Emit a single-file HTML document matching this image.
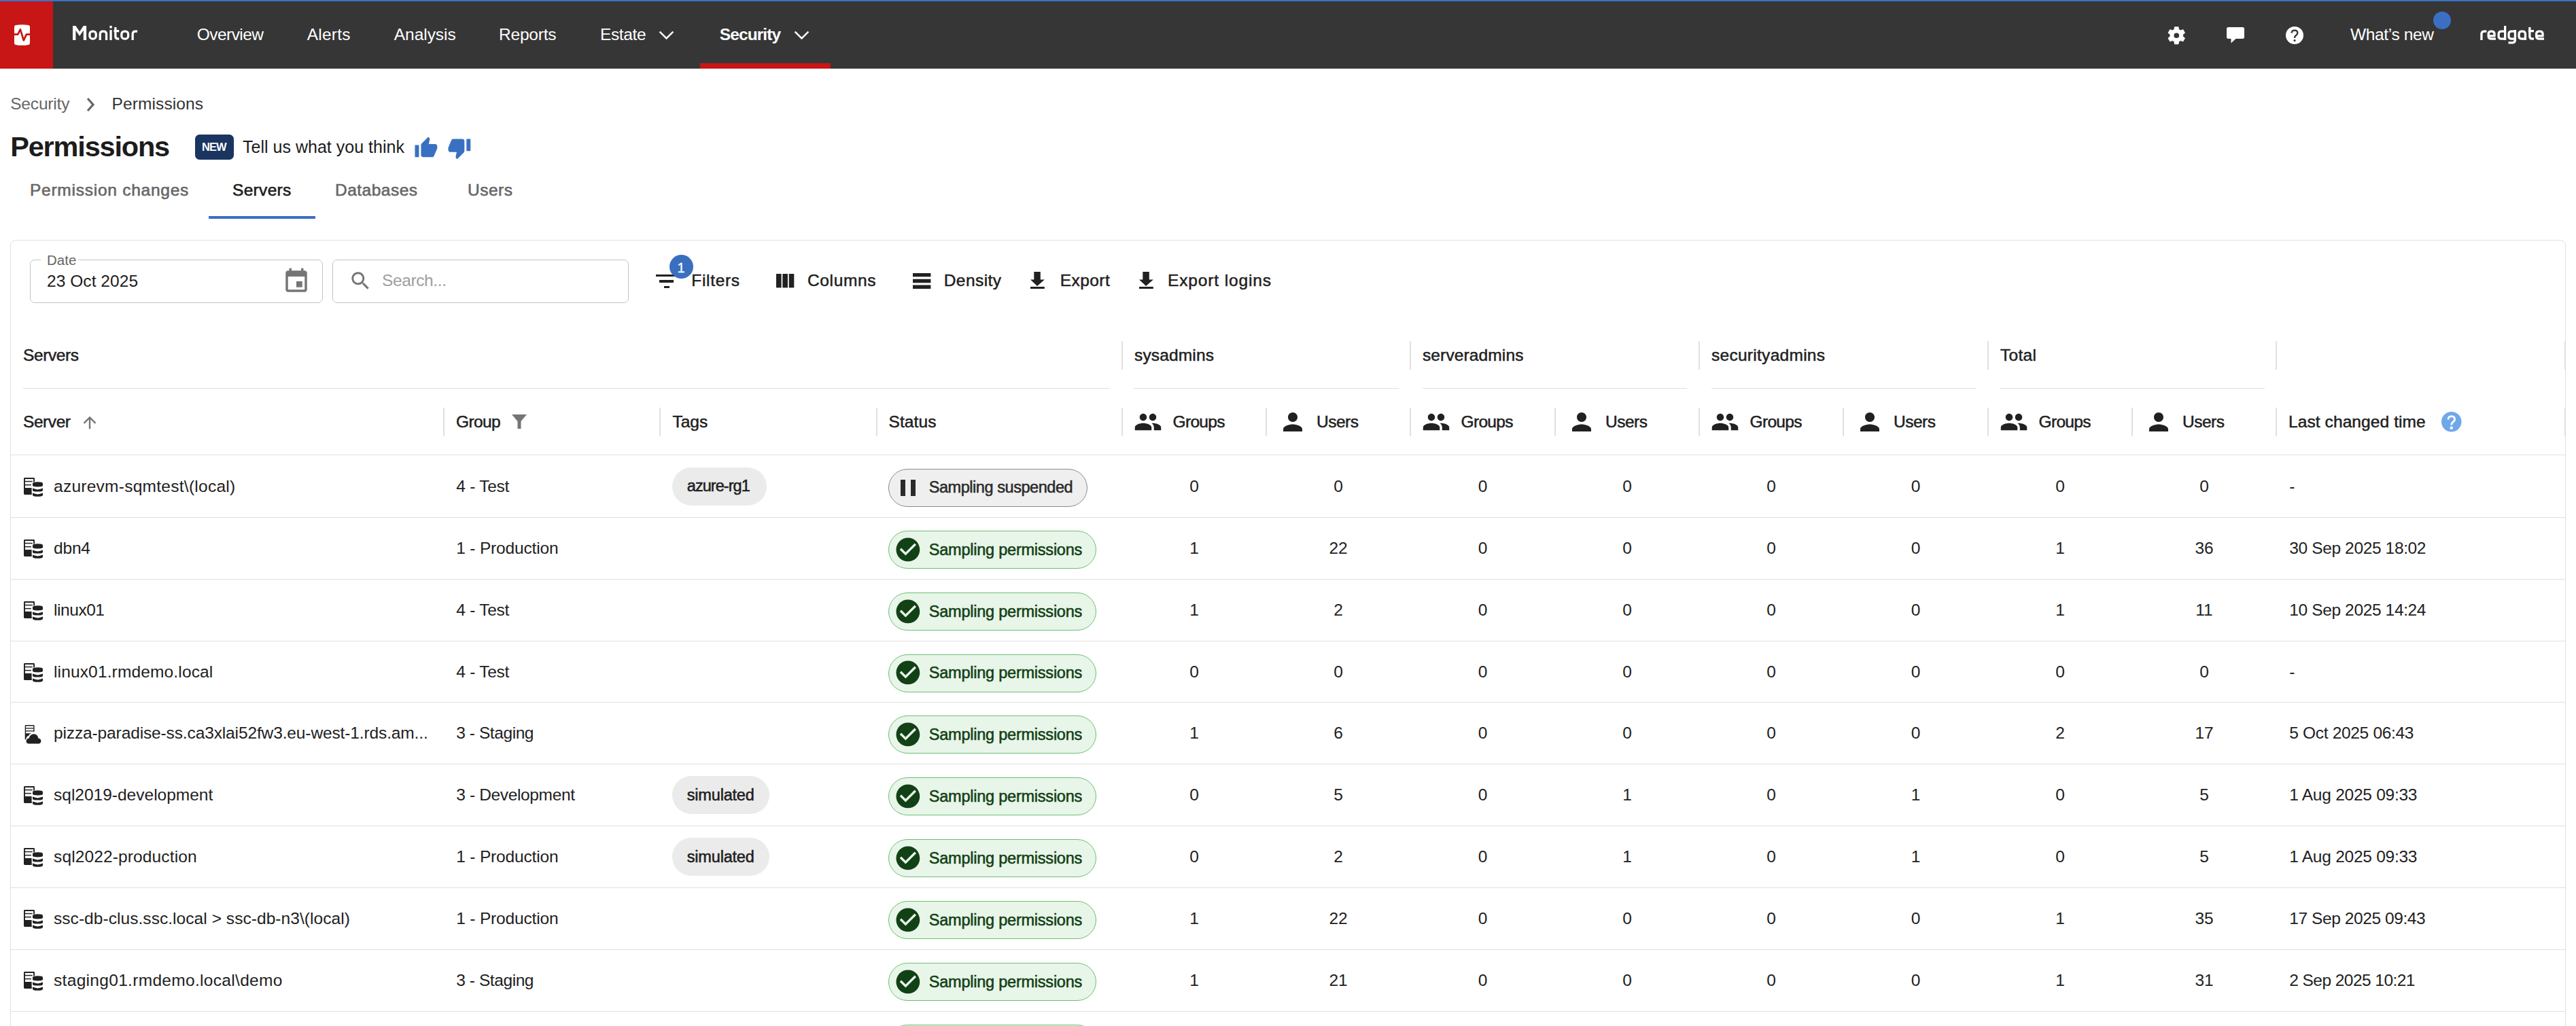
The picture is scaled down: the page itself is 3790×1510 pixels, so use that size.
<!DOCTYPE html>
<html><head><meta charset="utf-8"><title>Permissions - Servers</title>
<style>
html,body{margin:0;padding:0;background:#fff;width:3790px;height:1510px;overflow:hidden;}
body{position:relative;font-family:"Liberation Sans",sans-serif;}
svg{display:block;overflow:visible}
</style></head><body>
<div style="position:absolute;left:0px;top:0px;width:3790px;height:2px;background:#3a74c4"></div>
<div style="position:absolute;left:0px;top:2px;width:3790px;height:99px;background:#363636"></div>
<div style="position:absolute;left:0px;top:2px;width:78px;height:99px;background:#c81515"></div>
<svg style="position:absolute;left:21.00px;top:36.00px;" width="23" height="31" viewBox="0 0 23 31"><path d="M0 3.6 Q0 1.5 2.2 1.1 Q11.5 -0.7 20.8 1.1 Q23 1.5 23 3.6 V27.4 Q23 29.5 20.8 29.9 Q11.5 31.7 2.2 29.9 Q0 29.5 0 27.4 Z" fill="#fff"/><path d="M0 14.6 H5.2 L8.9 7.3 L13.8 23.4 L18 14.6 H23" fill="none" stroke="#c81515" stroke-width="2.7" stroke-linejoin="round"/></svg>
<svg style="position:absolute;left:0;top:0" width="3790" height="101" viewBox="0 0 3790 101"><g fill="none" stroke="#fff" stroke-width="3.3" stroke-linejoin="round"><rect x="131.95" y="46.05" width="9.3" height="11.05" rx="4.2"/><path d="M147.25 59.06 V50.2 Q147.25 46.05 151.4 46.05 H152.4 Q156.55 46.05 156.55 50.2 V59.06"/><path d="M163.05 44.1 V59.06"/><path d="M169.85 40 V53.2 Q169.85 57.1 173.75 57.1 H175.2 M167.5 45.6 H175.2"/><rect x="178.85" y="46.05" width="9.8" height="11.05" rx="4.2"/><path d="M195.15 59.06 V50.2 Q195.15 46.05 199.3 46.05 H202.1"/><path d="M3650.95 59.06 V50.2 Q3650.95 46.05 3655.1 46.05 H3658.4"/><path d="M3672 57.1 H3665.3 Q3661.15 57.1 3661.15 52.95 V50.2 Q3661.15 46.05 3665.3 46.05 H3665.9 Q3670.05 46.05 3670.05 50.2 V52.9 H3661.15"/><path d="M3685.65 37.9 V59.06 M3685.65 57.1 H3680.3 Q3676.15 57.1 3676.15 52.95 V50.2 Q3676.15 46.05 3680.3 46.05 H3685.65"/><path d="M3700.45 44.1 V58.8 Q3700.45 62.9 3696.3 62.9 H3690.5 M3700.45 57.1 H3695.2 Q3691.05 57.1 3691.05 52.95 V50.2 Q3691.05 46.05 3695.2 46.05 H3700.45"/><path d="M3715.45 59.06 V50.2 Q3715.45 46.05 3711.3 46.05 H3710.2 Q3706.05 46.05 3706.05 50.2 V52.95 Q3706.05 57.1 3710.2 57.1 H3715.45"/><path d="M3721.85 40 V53.2 Q3721.85 57.1 3725.75 57.1 H3728 M3719.9 45.6 H3728"/><path d="M3743 57.1 H3735.75 Q3731.6 57.1 3731.6 52.95 V50.2 Q3731.6 46.05 3735.75 46.05 H3736.95 Q3741.1 46.05 3741.1 50.2 V52.9 H3731.6"/></g><g fill="#fff"><rect x="161.4" y="37.9" width="3.3" height="3.6"/><path d="M107 59.06 V37.9 H111.4 L117.1 46.6 L122.8 37.9 H127.1 V59.06 H122.8 V44.7 L117.1 53.1 L111.4 44.7 V59.06 Z"/></g></svg>
<div style="position:absolute;top:38.56px;font-size:24.5px;line-height:24.5px;color:#fff;white-space:nowrap;letter-spacing:-0.538px;left:289.70px;">Overview</div>
<div style="position:absolute;top:38.56px;font-size:24.5px;line-height:24.5px;color:#fff;white-space:nowrap;letter-spacing:0.236px;left:451.70px;">Alerts</div>
<div style="position:absolute;top:38.56px;font-size:24.5px;line-height:24.5px;color:#fff;white-space:nowrap;letter-spacing:-0.048px;left:579.80px;">Analysis</div>
<div style="position:absolute;top:38.56px;font-size:24.5px;line-height:24.5px;color:#fff;white-space:nowrap;letter-spacing:-0.196px;left:734.00px;">Reports</div>
<div style="position:absolute;top:38.56px;font-size:24.5px;line-height:24.5px;color:#fff;white-space:nowrap;letter-spacing:-0.331px;left:882.90px;">Estate</div>
<div style="position:absolute;top:38.56px;font-size:24.5px;line-height:24.5px;color:#fff;white-space:nowrap;font-weight:700;letter-spacing:-0.911px;left:1058.80px;">Security</div>
<svg style="position:absolute;left:969.00px;top:45.30px;" width="23" height="14" viewBox="0 0 23 14"><path d="M1.6 1.6 L11.5 11.5 L21.4 1.6" fill="none" stroke="#fff" stroke-width="2.5"/></svg>
<svg style="position:absolute;left:1167.50px;top:45.30px;" width="23" height="14" viewBox="0 0 23 14"><path d="M1.6 1.6 L11.5 11.5 L21.4 1.6" fill="none" stroke="#fff" stroke-width="2.5"/></svg>
<div style="position:absolute;left:1030px;top:93px;width:192px;height:8px;background:#c81515"></div>
<svg style="position:absolute;left:3185.75px;top:35.75px;" width="32.5" height="32.5" viewBox="0 0 24 24"><path fill="#fff" d="M19.14,12.94c0.04-0.3,0.06-0.61,0.06-0.94c0-0.32-0.02-0.64-0.07-0.94l2.03-1.58c0.18-0.14,0.23-0.41,0.12-0.61 l-1.92-3.32c-0.12-0.22-0.37-0.29-0.59-0.22l-2.39,0.96c-0.5-0.38-1.03-0.7-1.62-0.94L14.4,2.81c-0.04-0.24-0.24-0.41-0.48-0.41 h-3.84c-0.24,0-0.43,0.17-0.47,0.41L9.25,5.35C8.66,5.59,8.12,5.92,7.63,6.29L5.24,5.33c-0.22-0.08-0.47,0-0.59,0.22L2.74,8.87 C2.62,9.08,2.66,9.34,2.86,9.48l2.03,1.58C4.84,11.36,4.8,11.69,4.8,12s0.02,0.64,0.07,0.94l-2.03,1.58 c-0.18,0.14-0.23,0.41-0.12,0.61l1.92,3.32c0.12,0.22,0.37,0.29,0.59,0.22l2.39-0.96c0.5,0.38,1.03,0.7,1.62,0.94l0.36,2.54 c0.05,0.24,0.24,0.41,0.48,0.41h3.84c0.24,0,0.44-0.17,0.47-0.41l0.36-2.54c0.59-0.24,1.13-0.56,1.62-0.94l2.39,0.96 c0.22,0.08,0.47,0,0.59-0.22l1.92-3.32c0.12-0.22,0.07-0.47-0.12-0.61L19.14,12.94z"/><circle cx="12" cy="12" r="2.85" fill="#363636"/></svg>
<svg style="position:absolute;left:3276.00px;top:40.00px;" width="26" height="24" viewBox="0 0 26 24"><path fill="#fff" d="M2.5 0 H23.5 Q26 0 26 2.5 V14.5 Q26 17 23.5 17 H13.5 L6.5 23.5 V17 H2.5 Q0 17 0 14.5 V2.5 Q0 0 2.5 0 Z"/></svg>
<svg style="position:absolute;left:3363.00px;top:39.00px;" width="26" height="26" viewBox="0 0 26 26"><circle cx="13" cy="13" r="13" fill="#fff"/><path d="M8.6 9.6 Q8.8 5.6 13 5.6 Q17.3 5.7 17.3 9.4 Q17.3 11.6 14.8 13.3 Q13 14.6 13 17" fill="none" stroke="#363636" stroke-width="2.4"/><circle cx="13" cy="20.6" r="1.6" fill="#363636"/></svg>
<div style="position:absolute;top:38.56px;font-size:24.5px;line-height:24.5px;color:#fff;white-space:nowrap;letter-spacing:-0.361px;left:3458.00px;">What’s new</div>
<div style="position:absolute;left:3580px;top:17px;width:26px;height:26px;border-radius:50%;background:#3a6fc4"></div>
<div style="position:absolute;top:140.76px;font-size:24.5px;line-height:24.5px;color:#666;white-space:nowrap;letter-spacing:-0.171px;left:15.20px;">Security</div>
<svg style="position:absolute;left:124.00px;top:142.00px;" width="20" height="24" viewBox="0 0 20 24"><path d="M5 3 L13 12 L5 21" fill="none" stroke="#666" stroke-width="3.2"/></svg>
<div style="position:absolute;top:140.76px;font-size:24.5px;line-height:24.5px;color:#333;white-space:nowrap;letter-spacing:0.097px;left:164.60px;">Permissions</div>
<div style="position:absolute;top:195.36px;font-size:41.5px;line-height:41.5px;color:#1c1c1c;white-space:nowrap;font-weight:700;letter-spacing:-1.180px;left:15.20px;">Permissions</div>
<div style="position:absolute;left:287px;top:198px;width:57px;height:37px;border-radius:6.5px;background:#1a3560"></div>
<div style="position:absolute;top:208.03px;font-size:16.5px;line-height:16.5px;color:#fff;white-space:nowrap;font-weight:700;letter-spacing:-0.997px;left:297.00px;">NEW</div>
<div style="position:absolute;top:203.83px;font-size:25px;line-height:25px;color:#1c1c1c;white-space:nowrap;letter-spacing:0.015px;left:357.00px;">Tell us what you think</div>
<svg style="position:absolute;left:608.51px;top:200.41px;" width="35.76" height="35.76" viewBox="0 0 24 24"><path fill="#3a70c2" d="M1 21h4V9H1v12zm22-11c0-1.1-.9-2-2-2h-6.31l.95-4.57.03-.32c0-.41-.17-.79-.44-1.06L14.17 1 7.59 7.59C7.22 7.95 7 8.45 7 9v10c0 1.1.9 2 2 2h9c.83 0 1.54-.5 1.84-1.22l3.02-7.05c.09-.23.14-.47.14-.73v-2z"/></svg>
<svg style="position:absolute;left:657.51px;top:199.83px;" width="35.76" height="35.76" viewBox="0 0 24 24"><path fill="#3a70c2" d="M15 3H6c-.83 0-1.54.5-1.84 1.22l-3.02 7.05c-.09.23-.14.47-.14.73v2c0 1.1.9 2 2 2h6.31l-.95 4.57-.03.32c0 .41.17.79.44 1.06L9.83 23l6.59-6.59c.36-.36.58-.86.58-1.41V5c0-1.1-.9-2-2-2zm4 0v12h4V3h-4z"/></svg>
<div style="position:absolute;top:268.06px;font-size:24.5px;line-height:24.5px;color:#666;white-space:nowrap;letter-spacing:0.747px;-webkit-text-stroke:0.6px #666;left:44.00px;">Permission changes</div>
<div style="position:absolute;top:268.06px;font-size:24.5px;line-height:24.5px;color:#1c1c1c;white-space:nowrap;letter-spacing:0.316px;-webkit-text-stroke:0.6px #1c1c1c;left:342.00px;">Servers</div>
<div style="position:absolute;top:268.06px;font-size:24.5px;line-height:24.5px;color:#666;white-space:nowrap;letter-spacing:0.483px;-webkit-text-stroke:0.6px #666;left:493.00px;">Databases</div>
<div style="position:absolute;top:268.06px;font-size:24.5px;line-height:24.5px;color:#666;white-space:nowrap;letter-spacing:0.508px;-webkit-text-stroke:0.6px #666;left:688.00px;">Users</div>
<div style="position:absolute;left:307px;top:318px;width:157px;height:4px;background:#3a6fc4"></div>
<div style="position:absolute;left:15px;top:353px;width:3760px;height:1300px;border:1px solid #e0e0e0;border-radius:8px;box-sizing:border-box"></div>
<div style="position:absolute;left:44px;top:382px;width:431px;height:64px;border:1.5px solid #c4c4c4;border-radius:7px;box-sizing:border-box"></div>
<div style="position:absolute;left:60px;top:374px;width:55px;height:14px;background:#fff"></div>
<div style="position:absolute;top:372.64px;font-size:20.5px;line-height:20.5px;color:#666;white-space:nowrap;letter-spacing:0.068px;left:69.00px;">Date</div>
<div style="position:absolute;top:402.06px;font-size:24.5px;line-height:24.5px;color:#1c1c1c;white-space:nowrap;letter-spacing:0.052px;left:69.00px;">23 Oct 2025</div>
<svg style="position:absolute;left:414.85px;top:393.25px;" width="42.0" height="42.0" viewBox="0 0 24 24"><path fill="#757575" d="M17 12h-5v5h5v-5zM16 1v2H8V1H6v2H5c-1.11 0-1.99.9-1.99 2L3 19c0 1.1.89 2 2 2h14c1.1 0 2-.9 2-2V5c0-1.1-.9-2-2-2h-1V1h-2zm3 18H5V8h14v11z"/></svg>
<div style="position:absolute;left:489px;top:382px;width:436px;height:64px;border:1.5px solid #c4c4c4;border-radius:7px;box-sizing:border-box"></div>
<svg style="position:absolute;left:512.94px;top:396.04px;" width="34.848" height="34.848" viewBox="0 0 24 24"><path fill="#757575" d="M15.5 14h-.79l-.28-.27C15.41 12.59 16 11.11 16 9.5 16 5.91 13.09 3 9.5 3S3 5.91 3 9.5 5.91 16 9.5 16c1.61 0 3.09-.59 4.23-1.57l.27.28v.79l5 4.99L20.49 19l-4.99-5zm-6 0C7.01 14 5 11.99 5 9.5S7.01 5 9.5 5 14 7.01 14 9.5 11.99 14 9.5 14z"/></svg>
<div style="position:absolute;top:401.26px;font-size:24.5px;line-height:24.5px;color:#9e9e9e;white-space:nowrap;letter-spacing:-0.381px;left:562.00px;">Search...</div>
<div style="position:absolute;left:965px;top:403.5px;width:32px;height:3.2px;background:#212121"></div>
<div style="position:absolute;left:970.2px;top:412.3px;width:21.3px;height:3.3px;background:#212121"></div>
<div style="position:absolute;left:977.4px;top:421px;width:7.3px;height:3.4px;background:#212121"></div>
<div style="position:absolute;left:984.5px;top:375.3px;width:35px;height:35px;border-radius:50%;background:#3a6fc0"></div>
<div style="position:absolute;top:384.07px;font-size:20px;line-height:20px;color:#fff;white-space:nowrap;-webkit-text-stroke:0.3px #fff;left:996.44px;">1</div>
<div style="position:absolute;top:401.26px;font-size:24.5px;line-height:24.5px;color:#212121;white-space:nowrap;letter-spacing:0.669px;-webkit-text-stroke:0.5px #212121;left:1017.30px;">Filters</div>
<svg style="position:absolute;left:1142.20px;top:403.30px;" width="26.3" height="20.4" viewBox="0 0 26.3 20.4"><rect x="0" y="0" width="7.6" height="20.4" fill="#212121"/><rect x="9.35" y="0" width="7.6" height="20.4" fill="#212121"/><rect x="18.7" y="0" width="7.6" height="20.4" fill="#212121"/></svg>
<div style="position:absolute;top:401.26px;font-size:24.5px;line-height:24.5px;color:#212121;white-space:nowrap;letter-spacing:0.637px;-webkit-text-stroke:0.5px #212121;left:1188.00px;">Columns</div>
<svg style="position:absolute;left:1343.30px;top:402.00px;" width="26.4" height="23.1" viewBox="0 0 26.4 23.1"><rect x="0" y="0" width="26.4" height="5.3" fill="#212121"/><rect x="0" y="8.7" width="26.4" height="5.6" fill="#212121"/><rect x="0" y="17.5" width="26.4" height="5.6" fill="#212121"/></svg>
<div style="position:absolute;top:401.26px;font-size:24.5px;line-height:24.5px;color:#212121;white-space:nowrap;letter-spacing:0.436px;-webkit-text-stroke:0.5px #212121;left:1388.70px;">Density</div>
<svg style="position:absolute;left:1516.20px;top:400.00px;" width="20.8" height="25" viewBox="0 0 20.8 25"><path fill="#212121" d="M5.3 0 H14.8 V11.5 H20.8 L10.05 21 L0 11.5 H5.3 Z"/><rect x="0" y="22" width="20.8" height="3" fill="#212121"/></svg>
<div style="position:absolute;top:401.26px;font-size:24.5px;line-height:24.5px;color:#212121;white-space:nowrap;letter-spacing:0.439px;-webkit-text-stroke:0.5px #212121;left:1559.70px;">Export</div>
<svg style="position:absolute;left:1676.00px;top:400.00px;" width="20.8" height="25" viewBox="0 0 20.8 25"><path fill="#212121" d="M5.3 0 H14.8 V11.5 H20.8 L10.05 21 L0 11.5 H5.3 Z"/><rect x="0" y="22" width="20.8" height="3" fill="#212121"/></svg>
<div style="position:absolute;top:401.26px;font-size:24.5px;line-height:24.5px;color:#212121;white-space:nowrap;letter-spacing:0.864px;-webkit-text-stroke:0.5px #212121;left:1718.00px;">Export logins</div>
<div style="position:absolute;top:511.26px;font-size:24.5px;line-height:24.5px;color:#212121;white-space:nowrap;letter-spacing:-0.400px;-webkit-text-stroke:0.5px #212121;left:34.00px;">Servers</div>
<div style="position:absolute;left:1650px;top:502px;width:2px;height:42px;background:#e0e0e0"></div>
<div style="position:absolute;top:511.26px;font-size:24.5px;line-height:24.5px;color:#212121;white-space:nowrap;letter-spacing:0.158px;-webkit-text-stroke:0.5px #212121;left:1669.00px;">sysadmins</div>
<div style="position:absolute;left:2074px;top:502px;width:2px;height:42px;background:#e0e0e0"></div>
<div style="position:absolute;top:511.26px;font-size:24.5px;line-height:24.5px;color:#212121;white-space:nowrap;letter-spacing:0.123px;-webkit-text-stroke:0.5px #212121;left:2093.00px;">serveradmins</div>
<div style="position:absolute;left:2499px;top:502px;width:2px;height:42px;background:#e0e0e0"></div>
<div style="position:absolute;top:511.26px;font-size:24.5px;line-height:24.5px;color:#212121;white-space:nowrap;letter-spacing:0.278px;-webkit-text-stroke:0.5px #212121;left:2518.00px;">securityadmins</div>
<div style="position:absolute;left:2924px;top:502px;width:2px;height:42px;background:#e0e0e0"></div>
<div style="position:absolute;top:511.26px;font-size:24.5px;line-height:24.5px;color:#212121;white-space:nowrap;letter-spacing:0.314px;-webkit-text-stroke:0.5px #212121;left:2943.00px;">Total</div>
<div style="position:absolute;left:3348px;top:502px;width:2px;height:42px;background:#e0e0e0"></div>
<div style="position:absolute;left:3773px;top:502px;width:2px;height:42px;background:#e0e0e0"></div>
<div style="position:absolute;left:34px;top:571px;width:1599px;height:1px;background:#e0e0e0"></div>
<div style="position:absolute;left:1668px;top:571px;width:390px;height:1px;background:#e0e0e0"></div>
<div style="position:absolute;left:2093px;top:571px;width:389px;height:1px;background:#e0e0e0"></div>
<div style="position:absolute;left:2518px;top:571px;width:389px;height:1px;background:#e0e0e0"></div>
<div style="position:absolute;left:2942px;top:571px;width:390px;height:1px;background:#e0e0e0"></div>
<div style="position:absolute;top:608.56px;font-size:24.5px;line-height:24.5px;color:#212121;white-space:nowrap;letter-spacing:-0.431px;-webkit-text-stroke:0.5px #212121;left:34.00px;">Server</div>
<svg style="position:absolute;left:117.50px;top:607.50px;" width="28" height="28" viewBox="0 0 24 24"><path fill="#757575" d="M4 12l1.41 1.41L11 7.83V20h2V7.83l5.58 5.59L20 12l-8-8-8 8z"/></svg>
<div style="position:absolute;top:608.56px;font-size:24.5px;line-height:24.5px;color:#212121;white-space:nowrap;letter-spacing:-0.646px;-webkit-text-stroke:0.5px #212121;left:671.00px;">Group</div>
<svg style="position:absolute;left:753.00px;top:610.00px;" width="22" height="21" viewBox="0 0 22 21"><path fill="#757575" d="M0 0 H22 L13.5 10 V21 H8.5 V10 Z"/></svg>
<div style="position:absolute;top:608.56px;font-size:24.5px;line-height:24.5px;color:#212121;white-space:nowrap;letter-spacing:-0.048px;-webkit-text-stroke:0.5px #212121;left:989.60px;">Tags</div>
<div style="position:absolute;top:608.56px;font-size:24.5px;line-height:24.5px;color:#212121;white-space:nowrap;letter-spacing:0.109px;-webkit-text-stroke:0.5px #212121;left:1307.50px;">Status</div>
<div style="position:absolute;left:1650px;top:600px;width:2px;height:42px;background:#e0e0e0"></div>
<svg style="position:absolute;left:1667.95px;top:600.20px;" width="42" height="42" viewBox="0 0 24 24"><path fill="#212121" d="M16 11c1.66 0 2.99-1.34 2.99-3S17.66 5 16 5c-1.66 0-3 1.34-3 3s1.34 3 3 3zm-8 0c1.66 0 2.99-1.34 2.99-3S9.66 5 8 5C6.34 5 5 6.34 5 8s1.34 3 3 3zm0 2c-2.33 0-7 1.17-7 3.5V19h14v-2.5c0-2.33-4.67-3.5-7-3.5zm8 0c-.29 0-.62.02-.97.05 1.16.84 1.97 1.97 1.97 3.45V19h6v-2.5c0-2.33-4.67-3.5-7-3.5z"/></svg>
<div style="position:absolute;top:608.56px;font-size:24.5px;line-height:24.5px;color:#212121;white-space:nowrap;letter-spacing:-0.667px;-webkit-text-stroke:0.5px #212121;left:1725.50px;">Groups</div>
<div style="position:absolute;left:1862px;top:600px;width:2px;height:42px;background:#e0e0e0"></div>
<svg style="position:absolute;left:1881.00px;top:600.00px;" width="42" height="42" viewBox="0 0 24 24"><path fill="#212121" d="M12 12c2.21 0 4-1.79 4-4s-1.79-4-4-4-4 1.79-4 4 1.79 4 4 4zm0 2c-2.67 0-8 1.34-8 4v2h16v-2c0-2.66-5.33-4-8-4z"/></svg>
<div style="position:absolute;top:608.56px;font-size:24.5px;line-height:24.5px;color:#212121;white-space:nowrap;letter-spacing:-0.492px;-webkit-text-stroke:0.5px #212121;left:1937.00px;">Users</div>
<div style="position:absolute;left:2074px;top:600px;width:2px;height:42px;background:#e0e0e0"></div>
<svg style="position:absolute;left:2091.95px;top:600.20px;" width="42" height="42" viewBox="0 0 24 24"><path fill="#212121" d="M16 11c1.66 0 2.99-1.34 2.99-3S17.66 5 16 5c-1.66 0-3 1.34-3 3s1.34 3 3 3zm-8 0c1.66 0 2.99-1.34 2.99-3S9.66 5 8 5C6.34 5 5 6.34 5 8s1.34 3 3 3zm0 2c-2.33 0-7 1.17-7 3.5V19h14v-2.5c0-2.33-4.67-3.5-7-3.5zm8 0c-.29 0-.62.02-.97.05 1.16.84 1.97 1.97 1.97 3.45V19h6v-2.5c0-2.33-4.67-3.5-7-3.5z"/></svg>
<div style="position:absolute;top:608.56px;font-size:24.5px;line-height:24.5px;color:#212121;white-space:nowrap;letter-spacing:-0.667px;-webkit-text-stroke:0.5px #212121;left:2149.50px;">Groups</div>
<div style="position:absolute;left:2287px;top:600px;width:2px;height:42px;background:#e0e0e0"></div>
<svg style="position:absolute;left:2306.00px;top:600.00px;" width="42" height="42" viewBox="0 0 24 24"><path fill="#212121" d="M12 12c2.21 0 4-1.79 4-4s-1.79-4-4-4-4 1.79-4 4 1.79 4 4 4zm0 2c-2.67 0-8 1.34-8 4v2h16v-2c0-2.66-5.33-4-8-4z"/></svg>
<div style="position:absolute;top:608.56px;font-size:24.5px;line-height:24.5px;color:#212121;white-space:nowrap;letter-spacing:-0.492px;-webkit-text-stroke:0.5px #212121;left:2362.00px;">Users</div>
<div style="position:absolute;left:2499px;top:600px;width:2px;height:42px;background:#e0e0e0"></div>
<svg style="position:absolute;left:2516.95px;top:600.20px;" width="42" height="42" viewBox="0 0 24 24"><path fill="#212121" d="M16 11c1.66 0 2.99-1.34 2.99-3S17.66 5 16 5c-1.66 0-3 1.34-3 3s1.34 3 3 3zm-8 0c1.66 0 2.99-1.34 2.99-3S9.66 5 8 5C6.34 5 5 6.34 5 8s1.34 3 3 3zm0 2c-2.33 0-7 1.17-7 3.5V19h14v-2.5c0-2.33-4.67-3.5-7-3.5zm8 0c-.29 0-.62.02-.97.05 1.16.84 1.97 1.97 1.97 3.45V19h6v-2.5c0-2.33-4.67-3.5-7-3.5z"/></svg>
<div style="position:absolute;top:608.56px;font-size:24.5px;line-height:24.5px;color:#212121;white-space:nowrap;letter-spacing:-0.667px;-webkit-text-stroke:0.5px #212121;left:2574.50px;">Groups</div>
<div style="position:absolute;left:2711px;top:600px;width:2px;height:42px;background:#e0e0e0"></div>
<svg style="position:absolute;left:2730.00px;top:600.00px;" width="42" height="42" viewBox="0 0 24 24"><path fill="#212121" d="M12 12c2.21 0 4-1.79 4-4s-1.79-4-4-4-4 1.79-4 4 1.79 4 4 4zm0 2c-2.67 0-8 1.34-8 4v2h16v-2c0-2.66-5.33-4-8-4z"/></svg>
<div style="position:absolute;top:608.56px;font-size:24.5px;line-height:24.5px;color:#212121;white-space:nowrap;letter-spacing:-0.492px;-webkit-text-stroke:0.5px #212121;left:2786.00px;">Users</div>
<div style="position:absolute;left:2924px;top:600px;width:2px;height:42px;background:#e0e0e0"></div>
<svg style="position:absolute;left:2941.95px;top:600.20px;" width="42" height="42" viewBox="0 0 24 24"><path fill="#212121" d="M16 11c1.66 0 2.99-1.34 2.99-3S17.66 5 16 5c-1.66 0-3 1.34-3 3s1.34 3 3 3zm-8 0c1.66 0 2.99-1.34 2.99-3S9.66 5 8 5C6.34 5 5 6.34 5 8s1.34 3 3 3zm0 2c-2.33 0-7 1.17-7 3.5V19h14v-2.5c0-2.33-4.67-3.5-7-3.5zm8 0c-.29 0-.62.02-.97.05 1.16.84 1.97 1.97 1.97 3.45V19h6v-2.5c0-2.33-4.67-3.5-7-3.5z"/></svg>
<div style="position:absolute;top:608.56px;font-size:24.5px;line-height:24.5px;color:#212121;white-space:nowrap;letter-spacing:-0.667px;-webkit-text-stroke:0.5px #212121;left:2999.50px;">Groups</div>
<div style="position:absolute;left:3136px;top:600px;width:2px;height:42px;background:#e0e0e0"></div>
<svg style="position:absolute;left:3155.00px;top:600.00px;" width="42" height="42" viewBox="0 0 24 24"><path fill="#212121" d="M12 12c2.21 0 4-1.79 4-4s-1.79-4-4-4-4 1.79-4 4 1.79 4 4 4zm0 2c-2.67 0-8 1.34-8 4v2h16v-2c0-2.66-5.33-4-8-4z"/></svg>
<div style="position:absolute;top:608.56px;font-size:24.5px;line-height:24.5px;color:#212121;white-space:nowrap;letter-spacing:-0.492px;-webkit-text-stroke:0.5px #212121;left:3211.00px;">Users</div>
<div style="position:absolute;left:652px;top:600px;width:2px;height:42px;background:#e0e0e0"></div>
<div style="position:absolute;left:970px;top:600px;width:2px;height:42px;background:#e0e0e0"></div>
<div style="position:absolute;left:1289px;top:600px;width:2px;height:42px;background:#e0e0e0"></div>
<div style="position:absolute;left:3348px;top:600px;width:2px;height:42px;background:#e0e0e0"></div>
<div style="position:absolute;left:3773px;top:600px;width:2px;height:42px;background:#e0e0e0"></div>
<div style="position:absolute;top:608.56px;font-size:24.5px;line-height:24.5px;color:#212121;white-space:nowrap;letter-spacing:0.093px;-webkit-text-stroke:0.5px #212121;left:3367.00px;">Last changed time</div>
<svg style="position:absolute;left:3591.50px;top:605.80px;" width="29.5" height="29.5" viewBox="0 0 26 26"><circle cx="13" cy="13" r="13" fill="#6fa8e8"/><path d="M8.8 10 Q8.9 5.8 13 5.8 Q17.2 5.9 17.2 9.6 Q17.2 11.8 14.8 13.4 Q13 14.6 13 17.2" fill="none" stroke="#fff" stroke-width="2.5"/><rect x="11.3" y="19.2" width="3.4" height="3.4" fill="#fff"/></svg>
<div style="position:absolute;left:15px;top:669px;width:3760px;height:1px;background:#e0e0e0"></div>
<div style="position:absolute;left:15px;top:761px;width:3760px;height:1px;background:#e0e0e0"></div>
<svg style="position:absolute;left:35.00px;top:702.50px;" width="28" height="28" viewBox="0 0 28 28"><g fill="#212121">
<path d="M0 1.4 Q0 0 1.4 0 H14.6 Q16 0 16 1.4 V6.3 H14.1 V1.9 H1.9 V23.1 H11.6 V25 H1.4 Q0 25 0 23.6 Z"/>
<rect x="1" y="4.8" width="11.8" height="1.5"/>
<rect x="1" y="9.9" width="10" height="1.5"/>
<rect x="1" y="15" width="10.6" height="9.6"/>
<path d="M13 8.6 Q13 6.2 20.5 6.2 Q28 6.2 28 8.6 V11.2 Q28 13.4 20.5 13.4 Q13 13.4 13 11.2 Z"/>
<path d="M13 15.6 Q17 17.4 20.5 17.4 Q24 17.4 28 15.6 V18.4 Q28 20.6 20.5 20.6 Q13 20.6 13 18.4 Z"/>
<path d="M13 22.6 Q17 24.4 20.5 24.4 Q24 24.4 28 22.6 V25.4 Q28 27.7 20.5 27.7 Q13 27.7 13 25.4 Z"/>
</g></svg>
<div style="position:absolute;top:703.66px;font-size:24.5px;line-height:24.5px;color:#212121;white-space:nowrap;letter-spacing:0.264px;left:79.00px;">azurevm-sqmtest\(local)</div>
<div style="position:absolute;top:703.66px;font-size:24.5px;line-height:24.5px;color:#212121;white-space:nowrap;letter-spacing:-0.242px;left:671.20px;">4 - Test</div>
<div style="position:absolute;left:989px;top:687.70px;width:139px;height:56px;border-radius:28px;background:#ebebeb"></div>
<div style="position:absolute;top:704.30px;font-size:23.5px;line-height:23.5px;color:#212121;white-space:nowrap;letter-spacing:-0.947px;-webkit-text-stroke:0.55px #212121;left:1010.80px;">azure-rg1</div>
<div style="position:absolute;left:1307px;top:689.75px;width:293px;height:56px;border-radius:28px;background:#efefef;border:1.3px solid #8a8a8a;box-sizing:border-box"></div>
<div style="position:absolute;left:1325.3px;top:705.9px;width:7px;height:24.1px;background:#2b2b2b"></div>
<div style="position:absolute;left:1339.6px;top:705.9px;width:7px;height:24.1px;background:#2b2b2b"></div>
<div style="position:absolute;top:706.10px;font-size:23.5px;line-height:23.5px;color:#2b2b2b;white-space:nowrap;letter-spacing:-0.441px;-webkit-text-stroke:0.55px #2b2b2b;left:1366.70px;">Sampling suspended</div>
<div style="position:absolute;top:703.66px;font-size:24.5px;line-height:24.5px;color:#212121;white-space:nowrap;left:1750.19px;">0</div>
<div style="position:absolute;top:703.66px;font-size:24.5px;line-height:24.5px;color:#212121;white-space:nowrap;left:1962.19px;">0</div>
<div style="position:absolute;top:703.66px;font-size:24.5px;line-height:24.5px;color:#212121;white-space:nowrap;left:2174.69px;">0</div>
<div style="position:absolute;top:703.66px;font-size:24.5px;line-height:24.5px;color:#212121;white-space:nowrap;left:2387.19px;">0</div>
<div style="position:absolute;top:703.66px;font-size:24.5px;line-height:24.5px;color:#212121;white-space:nowrap;left:2599.19px;">0</div>
<div style="position:absolute;top:703.66px;font-size:24.5px;line-height:24.5px;color:#212121;white-space:nowrap;left:2811.69px;">0</div>
<div style="position:absolute;top:703.66px;font-size:24.5px;line-height:24.5px;color:#212121;white-space:nowrap;left:3024.19px;">0</div>
<div style="position:absolute;top:703.66px;font-size:24.5px;line-height:24.5px;color:#212121;white-space:nowrap;left:3236.19px;">0</div>
<div style="position:absolute;top:703.66px;font-size:24.5px;line-height:24.5px;color:#212121;white-space:nowrap;left:3368.20px;">-</div>
<div style="position:absolute;left:15px;top:852px;width:3760px;height:1px;background:#e0e0e0"></div>
<svg style="position:absolute;left:35.00px;top:794.00px;" width="28" height="28" viewBox="0 0 28 28"><g fill="#212121">
<path d="M0 1.4 Q0 0 1.4 0 H14.6 Q16 0 16 1.4 V6.3 H14.1 V1.9 H1.9 V23.1 H11.6 V25 H1.4 Q0 25 0 23.6 Z"/>
<rect x="1" y="4.8" width="11.8" height="1.5"/>
<rect x="1" y="9.9" width="10" height="1.5"/>
<rect x="1" y="15" width="10.6" height="9.6"/>
<path d="M13 8.6 Q13 6.2 20.5 6.2 Q28 6.2 28 8.6 V11.2 Q28 13.4 20.5 13.4 Q13 13.4 13 11.2 Z"/>
<path d="M13 15.6 Q17 17.4 20.5 17.4 Q24 17.4 28 15.6 V18.4 Q28 20.6 20.5 20.6 Q13 20.6 13 18.4 Z"/>
<path d="M13 22.6 Q17 24.4 20.5 24.4 Q24 24.4 28 22.6 V25.4 Q28 27.7 20.5 27.7 Q13 27.7 13 25.4 Z"/>
</g></svg>
<div style="position:absolute;top:795.16px;font-size:24.5px;line-height:24.5px;color:#212121;white-space:nowrap;letter-spacing:-0.171px;left:79.00px;">dbn4</div>
<div style="position:absolute;top:795.16px;font-size:24.5px;line-height:24.5px;color:#212121;white-space:nowrap;letter-spacing:-0.164px;left:671.20px;">1 - Production</div>
<div style="position:absolute;left:1307px;top:781.25px;width:306px;height:56px;border-radius:28px;background:#e8f5e9;border:1.3px solid #6cc070;box-sizing:border-box"></div>
<svg style="position:absolute;left:1314.92px;top:787.92px;" width="41.76" height="41.76" viewBox="0 0 24 24"><circle cx="12" cy="12" r="9" fill="#e8f5e9"/><path fill="#124116" d="M12 2C6.48 2 2 6.48 2 12s4.48 10 10 10 10-4.48 10-10S17.52 2 12 2zm-2 15l-5-5 1.41-1.41L10 14.17l7.590-7.59L19 8l-9 9z"/></svg>
<div style="position:absolute;top:797.60px;font-size:23.5px;line-height:23.5px;color:#124116;white-space:nowrap;letter-spacing:-0.230px;-webkit-text-stroke:0.55px #124116;left:1366.80px;">Sampling permissions</div>
<div style="position:absolute;top:795.16px;font-size:24.5px;line-height:24.5px;color:#212121;white-space:nowrap;left:1750.19px;">1</div>
<div style="position:absolute;top:795.16px;font-size:24.5px;line-height:24.5px;color:#212121;white-space:nowrap;left:1955.38px;">22</div>
<div style="position:absolute;top:795.16px;font-size:24.5px;line-height:24.5px;color:#212121;white-space:nowrap;left:2174.69px;">0</div>
<div style="position:absolute;top:795.16px;font-size:24.5px;line-height:24.5px;color:#212121;white-space:nowrap;left:2387.19px;">0</div>
<div style="position:absolute;top:795.16px;font-size:24.5px;line-height:24.5px;color:#212121;white-space:nowrap;left:2599.19px;">0</div>
<div style="position:absolute;top:795.16px;font-size:24.5px;line-height:24.5px;color:#212121;white-space:nowrap;left:2811.69px;">0</div>
<div style="position:absolute;top:795.16px;font-size:24.5px;line-height:24.5px;color:#212121;white-space:nowrap;left:3024.19px;">1</div>
<div style="position:absolute;top:795.16px;font-size:24.5px;line-height:24.5px;color:#212121;white-space:nowrap;left:3229.38px;">36</div>
<div style="position:absolute;top:795.16px;font-size:24.5px;line-height:24.5px;color:#212121;white-space:nowrap;letter-spacing:-0.361px;left:3368.20px;">30 Sep 2025 18:02</div>
<div style="position:absolute;left:15px;top:943px;width:3760px;height:1px;background:#e0e0e0"></div>
<svg style="position:absolute;left:35.00px;top:885.00px;" width="28" height="28" viewBox="0 0 28 28"><g fill="#212121">
<path d="M0 1.4 Q0 0 1.4 0 H14.6 Q16 0 16 1.4 V6.3 H14.1 V1.9 H1.9 V23.1 H11.6 V25 H1.4 Q0 25 0 23.6 Z"/>
<rect x="1" y="4.8" width="11.8" height="1.5"/>
<rect x="1" y="9.9" width="10" height="1.5"/>
<rect x="1" y="15" width="10.6" height="9.6"/>
<path d="M13 8.6 Q13 6.2 20.5 6.2 Q28 6.2 28 8.6 V11.2 Q28 13.4 20.5 13.4 Q13 13.4 13 11.2 Z"/>
<path d="M13 15.6 Q17 17.4 20.5 17.4 Q24 17.4 28 15.6 V18.4 Q28 20.6 20.5 20.6 Q13 20.6 13 18.4 Z"/>
<path d="M13 22.6 Q17 24.4 20.5 24.4 Q24 24.4 28 22.6 V25.4 Q28 27.7 20.5 27.7 Q13 27.7 13 25.4 Z"/>
</g></svg>
<div style="position:absolute;top:886.16px;font-size:24.5px;line-height:24.5px;color:#212121;white-space:nowrap;letter-spacing:-0.440px;left:79.00px;">linux01</div>
<div style="position:absolute;top:886.16px;font-size:24.5px;line-height:24.5px;color:#212121;white-space:nowrap;letter-spacing:-0.242px;left:671.20px;">4 - Test</div>
<div style="position:absolute;left:1307px;top:872.25px;width:306px;height:56px;border-radius:28px;background:#e8f5e9;border:1.3px solid #6cc070;box-sizing:border-box"></div>
<svg style="position:absolute;left:1314.92px;top:878.92px;" width="41.76" height="41.76" viewBox="0 0 24 24"><circle cx="12" cy="12" r="9" fill="#e8f5e9"/><path fill="#124116" d="M12 2C6.48 2 2 6.48 2 12s4.48 10 10 10 10-4.48 10-10S17.52 2 12 2zm-2 15l-5-5 1.41-1.41L10 14.17l7.590-7.59L19 8l-9 9z"/></svg>
<div style="position:absolute;top:888.60px;font-size:23.5px;line-height:23.5px;color:#124116;white-space:nowrap;letter-spacing:-0.230px;-webkit-text-stroke:0.55px #124116;left:1366.80px;">Sampling permissions</div>
<div style="position:absolute;top:886.16px;font-size:24.5px;line-height:24.5px;color:#212121;white-space:nowrap;left:1750.19px;">1</div>
<div style="position:absolute;top:886.16px;font-size:24.5px;line-height:24.5px;color:#212121;white-space:nowrap;left:1962.19px;">2</div>
<div style="position:absolute;top:886.16px;font-size:24.5px;line-height:24.5px;color:#212121;white-space:nowrap;left:2174.69px;">0</div>
<div style="position:absolute;top:886.16px;font-size:24.5px;line-height:24.5px;color:#212121;white-space:nowrap;left:2387.19px;">0</div>
<div style="position:absolute;top:886.16px;font-size:24.5px;line-height:24.5px;color:#212121;white-space:nowrap;left:2599.19px;">0</div>
<div style="position:absolute;top:886.16px;font-size:24.5px;line-height:24.5px;color:#212121;white-space:nowrap;left:2811.69px;">0</div>
<div style="position:absolute;top:886.16px;font-size:24.5px;line-height:24.5px;color:#212121;white-space:nowrap;left:3024.19px;">1</div>
<div style="position:absolute;top:886.16px;font-size:24.5px;line-height:24.5px;color:#212121;white-space:nowrap;left:3230.28px;">11</div>
<div style="position:absolute;top:886.16px;font-size:24.5px;line-height:24.5px;color:#212121;white-space:nowrap;letter-spacing:-0.361px;left:3368.20px;">10 Sep 2025 14:24</div>
<div style="position:absolute;left:15px;top:1033px;width:3760px;height:1px;background:#e0e0e0"></div>
<svg style="position:absolute;left:35.00px;top:975.50px;" width="28" height="28" viewBox="0 0 28 28"><g fill="#212121">
<path d="M0 1.4 Q0 0 1.4 0 H14.6 Q16 0 16 1.4 V6.3 H14.1 V1.9 H1.9 V23.1 H11.6 V25 H1.4 Q0 25 0 23.6 Z"/>
<rect x="1" y="4.8" width="11.8" height="1.5"/>
<rect x="1" y="9.9" width="10" height="1.5"/>
<rect x="1" y="15" width="10.6" height="9.6"/>
<path d="M13 8.6 Q13 6.2 20.5 6.2 Q28 6.2 28 8.6 V11.2 Q28 13.4 20.5 13.4 Q13 13.4 13 11.2 Z"/>
<path d="M13 15.6 Q17 17.4 20.5 17.4 Q24 17.4 28 15.6 V18.4 Q28 20.6 20.5 20.6 Q13 20.6 13 18.4 Z"/>
<path d="M13 22.6 Q17 24.4 20.5 24.4 Q24 24.4 28 22.6 V25.4 Q28 27.7 20.5 27.7 Q13 27.7 13 25.4 Z"/>
</g></svg>
<div style="position:absolute;top:976.66px;font-size:24.5px;line-height:24.5px;color:#212121;white-space:nowrap;letter-spacing:0.147px;left:79.00px;">linux01.rmdemo.local</div>
<div style="position:absolute;top:976.66px;font-size:24.5px;line-height:24.5px;color:#212121;white-space:nowrap;letter-spacing:-0.242px;left:671.20px;">4 - Test</div>
<div style="position:absolute;left:1307px;top:962.75px;width:306px;height:56px;border-radius:28px;background:#e8f5e9;border:1.3px solid #6cc070;box-sizing:border-box"></div>
<svg style="position:absolute;left:1314.92px;top:969.42px;" width="41.76" height="41.76" viewBox="0 0 24 24"><circle cx="12" cy="12" r="9" fill="#e8f5e9"/><path fill="#124116" d="M12 2C6.48 2 2 6.48 2 12s4.48 10 10 10 10-4.48 10-10S17.52 2 12 2zm-2 15l-5-5 1.41-1.41L10 14.17l7.590-7.59L19 8l-9 9z"/></svg>
<div style="position:absolute;top:979.10px;font-size:23.5px;line-height:23.5px;color:#124116;white-space:nowrap;letter-spacing:-0.230px;-webkit-text-stroke:0.55px #124116;left:1366.80px;">Sampling permissions</div>
<div style="position:absolute;top:976.66px;font-size:24.5px;line-height:24.5px;color:#212121;white-space:nowrap;left:1750.19px;">0</div>
<div style="position:absolute;top:976.66px;font-size:24.5px;line-height:24.5px;color:#212121;white-space:nowrap;left:1962.19px;">0</div>
<div style="position:absolute;top:976.66px;font-size:24.5px;line-height:24.5px;color:#212121;white-space:nowrap;left:2174.69px;">0</div>
<div style="position:absolute;top:976.66px;font-size:24.5px;line-height:24.5px;color:#212121;white-space:nowrap;left:2387.19px;">0</div>
<div style="position:absolute;top:976.66px;font-size:24.5px;line-height:24.5px;color:#212121;white-space:nowrap;left:2599.19px;">0</div>
<div style="position:absolute;top:976.66px;font-size:24.5px;line-height:24.5px;color:#212121;white-space:nowrap;left:2811.69px;">0</div>
<div style="position:absolute;top:976.66px;font-size:24.5px;line-height:24.5px;color:#212121;white-space:nowrap;left:3024.19px;">0</div>
<div style="position:absolute;top:976.66px;font-size:24.5px;line-height:24.5px;color:#212121;white-space:nowrap;left:3236.19px;">0</div>
<div style="position:absolute;top:976.66px;font-size:24.5px;line-height:24.5px;color:#212121;white-space:nowrap;left:3368.20px;">-</div>
<div style="position:absolute;left:15px;top:1124px;width:3760px;height:1px;background:#e0e0e0"></div>
<svg style="position:absolute;left:35.00px;top:1066.50px;" width="28" height="28" viewBox="0 0 28 28"><g fill="#212121">
<path d="M1.7 1.2 Q1.7 0 2.9 0 H14.4 Q15.6 0 15.6 1.2 V9.8 H14.2 V1.4 H3.1 V20.5 Q2.4 22.5 1.7 21 Z"/>
<rect x="2.5" y="4.2" width="12.5" height="1.3"/>
<rect x="2.5" y="8.2" width="12.5" height="1.3"/>
<path d="M2.5 12.2 H11.5 Q8.5 12.8 7.3 15.5 Q4.2 16.5 3.2 20.5 H2.5 Z"/>
<path d="M6.7 27.5 Q3.6 27 3.6 23.5 Q3.8 19.9 7.6 19.4 Q9.3 13.5 14.6 13.3 Q20.6 13.7 21.3 19.6 Q25.3 20 25.4 23.7 Q25.2 27.3 21.5 27.5 Z"/>
</g></svg>
<div style="position:absolute;top:1067.16px;font-size:24.5px;line-height:24.5px;color:#212121;white-space:nowrap;letter-spacing:-0.125px;left:79.00px;">pizza-paradise-ss.ca3xlai52fw3.eu-west-1.rds.am...</div>
<div style="position:absolute;top:1067.16px;font-size:24.5px;line-height:24.5px;color:#212121;white-space:nowrap;letter-spacing:-0.418px;left:671.20px;">3 - Staging</div>
<div style="position:absolute;left:1307px;top:1053.25px;width:306px;height:56px;border-radius:28px;background:#e8f5e9;border:1.3px solid #6cc070;box-sizing:border-box"></div>
<svg style="position:absolute;left:1314.92px;top:1059.92px;" width="41.76" height="41.76" viewBox="0 0 24 24"><circle cx="12" cy="12" r="9" fill="#e8f5e9"/><path fill="#124116" d="M12 2C6.48 2 2 6.48 2 12s4.48 10 10 10 10-4.48 10-10S17.52 2 12 2zm-2 15l-5-5 1.41-1.41L10 14.17l7.590-7.59L19 8l-9 9z"/></svg>
<div style="position:absolute;top:1069.60px;font-size:23.5px;line-height:23.5px;color:#124116;white-space:nowrap;letter-spacing:-0.230px;-webkit-text-stroke:0.55px #124116;left:1366.80px;">Sampling permissions</div>
<div style="position:absolute;top:1067.16px;font-size:24.5px;line-height:24.5px;color:#212121;white-space:nowrap;left:1750.19px;">1</div>
<div style="position:absolute;top:1067.16px;font-size:24.5px;line-height:24.5px;color:#212121;white-space:nowrap;left:1962.19px;">6</div>
<div style="position:absolute;top:1067.16px;font-size:24.5px;line-height:24.5px;color:#212121;white-space:nowrap;left:2174.69px;">0</div>
<div style="position:absolute;top:1067.16px;font-size:24.5px;line-height:24.5px;color:#212121;white-space:nowrap;left:2387.19px;">0</div>
<div style="position:absolute;top:1067.16px;font-size:24.5px;line-height:24.5px;color:#212121;white-space:nowrap;left:2599.19px;">0</div>
<div style="position:absolute;top:1067.16px;font-size:24.5px;line-height:24.5px;color:#212121;white-space:nowrap;left:2811.69px;">0</div>
<div style="position:absolute;top:1067.16px;font-size:24.5px;line-height:24.5px;color:#212121;white-space:nowrap;left:3024.19px;">2</div>
<div style="position:absolute;top:1067.16px;font-size:24.5px;line-height:24.5px;color:#212121;white-space:nowrap;left:3229.38px;">17</div>
<div style="position:absolute;top:1067.16px;font-size:24.5px;line-height:24.5px;color:#212121;white-space:nowrap;letter-spacing:-0.311px;left:3368.20px;">5 Oct 2025 06:43</div>
<div style="position:absolute;left:15px;top:1215px;width:3760px;height:1px;background:#e0e0e0"></div>
<svg style="position:absolute;left:35.00px;top:1157.00px;" width="28" height="28" viewBox="0 0 28 28"><g fill="#212121">
<path d="M0 1.4 Q0 0 1.4 0 H14.6 Q16 0 16 1.4 V6.3 H14.1 V1.9 H1.9 V23.1 H11.6 V25 H1.4 Q0 25 0 23.6 Z"/>
<rect x="1" y="4.8" width="11.8" height="1.5"/>
<rect x="1" y="9.9" width="10" height="1.5"/>
<rect x="1" y="15" width="10.6" height="9.6"/>
<path d="M13 8.6 Q13 6.2 20.5 6.2 Q28 6.2 28 8.6 V11.2 Q28 13.4 20.5 13.4 Q13 13.4 13 11.2 Z"/>
<path d="M13 15.6 Q17 17.4 20.5 17.4 Q24 17.4 28 15.6 V18.4 Q28 20.6 20.5 20.6 Q13 20.6 13 18.4 Z"/>
<path d="M13 22.6 Q17 24.4 20.5 24.4 Q24 24.4 28 22.6 V25.4 Q28 27.7 20.5 27.7 Q13 27.7 13 25.4 Z"/>
</g></svg>
<div style="position:absolute;top:1158.16px;font-size:24.5px;line-height:24.5px;color:#212121;white-space:nowrap;letter-spacing:0.002px;left:79.00px;">sql2019-development</div>
<div style="position:absolute;top:1158.16px;font-size:24.5px;line-height:24.5px;color:#212121;white-space:nowrap;letter-spacing:-0.354px;left:671.20px;">3 - Development</div>
<div style="position:absolute;left:989px;top:1142.20px;width:142.5px;height:56px;border-radius:28px;background:#ebebeb"></div>
<div style="position:absolute;top:1158.80px;font-size:23.5px;line-height:23.5px;color:#212121;white-space:nowrap;letter-spacing:-0.197px;-webkit-text-stroke:0.55px #212121;left:1010.80px;">simulated</div>
<div style="position:absolute;left:1307px;top:1144.25px;width:306px;height:56px;border-radius:28px;background:#e8f5e9;border:1.3px solid #6cc070;box-sizing:border-box"></div>
<svg style="position:absolute;left:1314.92px;top:1150.92px;" width="41.76" height="41.76" viewBox="0 0 24 24"><circle cx="12" cy="12" r="9" fill="#e8f5e9"/><path fill="#124116" d="M12 2C6.48 2 2 6.48 2 12s4.48 10 10 10 10-4.48 10-10S17.52 2 12 2zm-2 15l-5-5 1.41-1.41L10 14.17l7.590-7.59L19 8l-9 9z"/></svg>
<div style="position:absolute;top:1160.60px;font-size:23.5px;line-height:23.5px;color:#124116;white-space:nowrap;letter-spacing:-0.230px;-webkit-text-stroke:0.55px #124116;left:1366.80px;">Sampling permissions</div>
<div style="position:absolute;top:1158.16px;font-size:24.5px;line-height:24.5px;color:#212121;white-space:nowrap;left:1750.19px;">0</div>
<div style="position:absolute;top:1158.16px;font-size:24.5px;line-height:24.5px;color:#212121;white-space:nowrap;left:1962.19px;">5</div>
<div style="position:absolute;top:1158.16px;font-size:24.5px;line-height:24.5px;color:#212121;white-space:nowrap;left:2174.69px;">0</div>
<div style="position:absolute;top:1158.16px;font-size:24.5px;line-height:24.5px;color:#212121;white-space:nowrap;left:2387.19px;">1</div>
<div style="position:absolute;top:1158.16px;font-size:24.5px;line-height:24.5px;color:#212121;white-space:nowrap;left:2599.19px;">0</div>
<div style="position:absolute;top:1158.16px;font-size:24.5px;line-height:24.5px;color:#212121;white-space:nowrap;left:2811.69px;">1</div>
<div style="position:absolute;top:1158.16px;font-size:24.5px;line-height:24.5px;color:#212121;white-space:nowrap;left:3024.19px;">0</div>
<div style="position:absolute;top:1158.16px;font-size:24.5px;line-height:24.5px;color:#212121;white-space:nowrap;left:3236.19px;">5</div>
<div style="position:absolute;top:1158.16px;font-size:24.5px;line-height:24.5px;color:#212121;white-space:nowrap;letter-spacing:-0.254px;left:3368.20px;">1 Aug 2025 09:33</div>
<div style="position:absolute;left:15px;top:1306px;width:3760px;height:1px;background:#e0e0e0"></div>
<svg style="position:absolute;left:35.00px;top:1248.00px;" width="28" height="28" viewBox="0 0 28 28"><g fill="#212121">
<path d="M0 1.4 Q0 0 1.4 0 H14.6 Q16 0 16 1.4 V6.3 H14.1 V1.9 H1.9 V23.1 H11.6 V25 H1.4 Q0 25 0 23.6 Z"/>
<rect x="1" y="4.8" width="11.8" height="1.5"/>
<rect x="1" y="9.9" width="10" height="1.5"/>
<rect x="1" y="15" width="10.6" height="9.6"/>
<path d="M13 8.6 Q13 6.2 20.5 6.2 Q28 6.2 28 8.6 V11.2 Q28 13.4 20.5 13.4 Q13 13.4 13 11.2 Z"/>
<path d="M13 15.6 Q17 17.4 20.5 17.4 Q24 17.4 28 15.6 V18.4 Q28 20.6 20.5 20.6 Q13 20.6 13 18.4 Z"/>
<path d="M13 22.6 Q17 24.4 20.5 24.4 Q24 24.4 28 22.6 V25.4 Q28 27.7 20.5 27.7 Q13 27.7 13 25.4 Z"/>
</g></svg>
<div style="position:absolute;top:1249.16px;font-size:24.5px;line-height:24.5px;color:#212121;white-space:nowrap;letter-spacing:0.130px;left:79.00px;">sql2022-production</div>
<div style="position:absolute;top:1249.16px;font-size:24.5px;line-height:24.5px;color:#212121;white-space:nowrap;letter-spacing:-0.164px;left:671.20px;">1 - Production</div>
<div style="position:absolute;left:989px;top:1233.20px;width:142.5px;height:56px;border-radius:28px;background:#ebebeb"></div>
<div style="position:absolute;top:1249.80px;font-size:23.5px;line-height:23.5px;color:#212121;white-space:nowrap;letter-spacing:-0.197px;-webkit-text-stroke:0.55px #212121;left:1010.80px;">simulated</div>
<div style="position:absolute;left:1307px;top:1235.25px;width:306px;height:56px;border-radius:28px;background:#e8f5e9;border:1.3px solid #6cc070;box-sizing:border-box"></div>
<svg style="position:absolute;left:1314.92px;top:1241.92px;" width="41.76" height="41.76" viewBox="0 0 24 24"><circle cx="12" cy="12" r="9" fill="#e8f5e9"/><path fill="#124116" d="M12 2C6.48 2 2 6.48 2 12s4.48 10 10 10 10-4.48 10-10S17.52 2 12 2zm-2 15l-5-5 1.41-1.41L10 14.17l7.590-7.59L19 8l-9 9z"/></svg>
<div style="position:absolute;top:1251.60px;font-size:23.5px;line-height:23.5px;color:#124116;white-space:nowrap;letter-spacing:-0.230px;-webkit-text-stroke:0.55px #124116;left:1366.80px;">Sampling permissions</div>
<div style="position:absolute;top:1249.16px;font-size:24.5px;line-height:24.5px;color:#212121;white-space:nowrap;left:1750.19px;">0</div>
<div style="position:absolute;top:1249.16px;font-size:24.5px;line-height:24.5px;color:#212121;white-space:nowrap;left:1962.19px;">2</div>
<div style="position:absolute;top:1249.16px;font-size:24.5px;line-height:24.5px;color:#212121;white-space:nowrap;left:2174.69px;">0</div>
<div style="position:absolute;top:1249.16px;font-size:24.5px;line-height:24.5px;color:#212121;white-space:nowrap;left:2387.19px;">1</div>
<div style="position:absolute;top:1249.16px;font-size:24.5px;line-height:24.5px;color:#212121;white-space:nowrap;left:2599.19px;">0</div>
<div style="position:absolute;top:1249.16px;font-size:24.5px;line-height:24.5px;color:#212121;white-space:nowrap;left:2811.69px;">1</div>
<div style="position:absolute;top:1249.16px;font-size:24.5px;line-height:24.5px;color:#212121;white-space:nowrap;left:3024.19px;">0</div>
<div style="position:absolute;top:1249.16px;font-size:24.5px;line-height:24.5px;color:#212121;white-space:nowrap;left:3236.19px;">5</div>
<div style="position:absolute;top:1249.16px;font-size:24.5px;line-height:24.5px;color:#212121;white-space:nowrap;letter-spacing:-0.254px;left:3368.20px;">1 Aug 2025 09:33</div>
<div style="position:absolute;left:15px;top:1397px;width:3760px;height:1px;background:#e0e0e0"></div>
<svg style="position:absolute;left:35.00px;top:1339.00px;" width="28" height="28" viewBox="0 0 28 28"><g fill="#212121">
<path d="M0 1.4 Q0 0 1.4 0 H14.6 Q16 0 16 1.4 V6.3 H14.1 V1.9 H1.9 V23.1 H11.6 V25 H1.4 Q0 25 0 23.6 Z"/>
<rect x="1" y="4.8" width="11.8" height="1.5"/>
<rect x="1" y="9.9" width="10" height="1.5"/>
<rect x="1" y="15" width="10.6" height="9.6"/>
<path d="M13 8.6 Q13 6.2 20.5 6.2 Q28 6.2 28 8.6 V11.2 Q28 13.4 20.5 13.4 Q13 13.4 13 11.2 Z"/>
<path d="M13 15.6 Q17 17.4 20.5 17.4 Q24 17.4 28 15.6 V18.4 Q28 20.6 20.5 20.6 Q13 20.6 13 18.4 Z"/>
<path d="M13 22.6 Q17 24.4 20.5 24.4 Q24 24.4 28 22.6 V25.4 Q28 27.7 20.5 27.7 Q13 27.7 13 25.4 Z"/>
</g></svg>
<div style="position:absolute;top:1340.16px;font-size:24.5px;line-height:24.5px;color:#212121;white-space:nowrap;letter-spacing:0.054px;left:79.00px;">ssc-db-clus.ssc.local &gt; ssc-db-n3\(local)</div>
<div style="position:absolute;top:1340.16px;font-size:24.5px;line-height:24.5px;color:#212121;white-space:nowrap;letter-spacing:-0.164px;left:671.20px;">1 - Production</div>
<div style="position:absolute;left:1307px;top:1326.25px;width:306px;height:56px;border-radius:28px;background:#e8f5e9;border:1.3px solid #6cc070;box-sizing:border-box"></div>
<svg style="position:absolute;left:1314.92px;top:1332.92px;" width="41.76" height="41.76" viewBox="0 0 24 24"><circle cx="12" cy="12" r="9" fill="#e8f5e9"/><path fill="#124116" d="M12 2C6.48 2 2 6.48 2 12s4.48 10 10 10 10-4.48 10-10S17.52 2 12 2zm-2 15l-5-5 1.41-1.41L10 14.17l7.590-7.59L19 8l-9 9z"/></svg>
<div style="position:absolute;top:1342.60px;font-size:23.5px;line-height:23.5px;color:#124116;white-space:nowrap;letter-spacing:-0.230px;-webkit-text-stroke:0.55px #124116;left:1366.80px;">Sampling permissions</div>
<div style="position:absolute;top:1340.16px;font-size:24.5px;line-height:24.5px;color:#212121;white-space:nowrap;left:1750.19px;">1</div>
<div style="position:absolute;top:1340.16px;font-size:24.5px;line-height:24.5px;color:#212121;white-space:nowrap;left:1955.38px;">22</div>
<div style="position:absolute;top:1340.16px;font-size:24.5px;line-height:24.5px;color:#212121;white-space:nowrap;left:2174.69px;">0</div>
<div style="position:absolute;top:1340.16px;font-size:24.5px;line-height:24.5px;color:#212121;white-space:nowrap;left:2387.19px;">0</div>
<div style="position:absolute;top:1340.16px;font-size:24.5px;line-height:24.5px;color:#212121;white-space:nowrap;left:2599.19px;">0</div>
<div style="position:absolute;top:1340.16px;font-size:24.5px;line-height:24.5px;color:#212121;white-space:nowrap;left:2811.69px;">0</div>
<div style="position:absolute;top:1340.16px;font-size:24.5px;line-height:24.5px;color:#212121;white-space:nowrap;left:3024.19px;">1</div>
<div style="position:absolute;top:1340.16px;font-size:24.5px;line-height:24.5px;color:#212121;white-space:nowrap;left:3229.38px;">35</div>
<div style="position:absolute;top:1340.16px;font-size:24.5px;line-height:24.5px;color:#212121;white-space:nowrap;letter-spacing:-0.411px;left:3368.20px;">17 Sep 2025 09:43</div>
<div style="position:absolute;left:15px;top:1488px;width:3760px;height:1px;background:#e0e0e0"></div>
<svg style="position:absolute;left:35.00px;top:1430.00px;" width="28" height="28" viewBox="0 0 28 28"><g fill="#212121">
<path d="M0 1.4 Q0 0 1.4 0 H14.6 Q16 0 16 1.4 V6.3 H14.1 V1.9 H1.9 V23.1 H11.6 V25 H1.4 Q0 25 0 23.6 Z"/>
<rect x="1" y="4.8" width="11.8" height="1.5"/>
<rect x="1" y="9.9" width="10" height="1.5"/>
<rect x="1" y="15" width="10.6" height="9.6"/>
<path d="M13 8.6 Q13 6.2 20.5 6.2 Q28 6.2 28 8.6 V11.2 Q28 13.4 20.5 13.4 Q13 13.4 13 11.2 Z"/>
<path d="M13 15.6 Q17 17.4 20.5 17.4 Q24 17.4 28 15.6 V18.4 Q28 20.6 20.5 20.6 Q13 20.6 13 18.4 Z"/>
<path d="M13 22.6 Q17 24.4 20.5 24.4 Q24 24.4 28 22.6 V25.4 Q28 27.7 20.5 27.7 Q13 27.7 13 25.4 Z"/>
</g></svg>
<div style="position:absolute;top:1431.16px;font-size:24.5px;line-height:24.5px;color:#212121;white-space:nowrap;letter-spacing:0.315px;left:79.00px;">staging01.rmdemo.local\demo</div>
<div style="position:absolute;top:1431.16px;font-size:24.5px;line-height:24.5px;color:#212121;white-space:nowrap;letter-spacing:-0.418px;left:671.20px;">3 - Staging</div>
<div style="position:absolute;left:1307px;top:1417.25px;width:306px;height:56px;border-radius:28px;background:#e8f5e9;border:1.3px solid #6cc070;box-sizing:border-box"></div>
<svg style="position:absolute;left:1314.92px;top:1423.92px;" width="41.76" height="41.76" viewBox="0 0 24 24"><circle cx="12" cy="12" r="9" fill="#e8f5e9"/><path fill="#124116" d="M12 2C6.48 2 2 6.48 2 12s4.48 10 10 10 10-4.48 10-10S17.52 2 12 2zm-2 15l-5-5 1.41-1.41L10 14.17l7.590-7.59L19 8l-9 9z"/></svg>
<div style="position:absolute;top:1433.60px;font-size:23.5px;line-height:23.5px;color:#124116;white-space:nowrap;letter-spacing:-0.230px;-webkit-text-stroke:0.55px #124116;left:1366.80px;">Sampling permissions</div>
<div style="position:absolute;top:1431.16px;font-size:24.5px;line-height:24.5px;color:#212121;white-space:nowrap;left:1750.19px;">1</div>
<div style="position:absolute;top:1431.16px;font-size:24.5px;line-height:24.5px;color:#212121;white-space:nowrap;left:1955.38px;">21</div>
<div style="position:absolute;top:1431.16px;font-size:24.5px;line-height:24.5px;color:#212121;white-space:nowrap;left:2174.69px;">0</div>
<div style="position:absolute;top:1431.16px;font-size:24.5px;line-height:24.5px;color:#212121;white-space:nowrap;left:2387.19px;">0</div>
<div style="position:absolute;top:1431.16px;font-size:24.5px;line-height:24.5px;color:#212121;white-space:nowrap;left:2599.19px;">0</div>
<div style="position:absolute;top:1431.16px;font-size:24.5px;line-height:24.5px;color:#212121;white-space:nowrap;left:2811.69px;">0</div>
<div style="position:absolute;top:1431.16px;font-size:24.5px;line-height:24.5px;color:#212121;white-space:nowrap;left:3024.19px;">1</div>
<div style="position:absolute;top:1431.16px;font-size:24.5px;line-height:24.5px;color:#212121;white-space:nowrap;left:3229.38px;">31</div>
<div style="position:absolute;top:1431.16px;font-size:24.5px;line-height:24.5px;color:#212121;white-space:nowrap;letter-spacing:-0.543px;left:3368.20px;">2 Sep 2025 10:21</div>
<div style="position:absolute;left:15px;top:1579px;width:3760px;height:1px;background:#e0e0e0"></div>
<div style="position:absolute;left:1307px;top:1508.25px;width:306px;height:56px;border-radius:28px;background:#e8f5e9;border:1.3px solid #6cc070;box-sizing:border-box"></div>
<svg style="position:absolute;left:1314.92px;top:1514.92px;" width="41.76" height="41.76" viewBox="0 0 24 24"><circle cx="12" cy="12" r="9" fill="#e8f5e9"/><path fill="#124116" d="M12 2C6.48 2 2 6.48 2 12s4.48 10 10 10 10-4.48 10-10S17.52 2 12 2zm-2 15l-5-5 1.41-1.41L10 14.17l7.590-7.59L19 8l-9 9z"/></svg>
<div style="position:absolute;top:1524.60px;font-size:23.5px;line-height:23.5px;color:#124116;white-space:nowrap;letter-spacing:-0.230px;-webkit-text-stroke:0.55px #124116;left:1366.80px;">Sampling permissions</div>
</body></html>
